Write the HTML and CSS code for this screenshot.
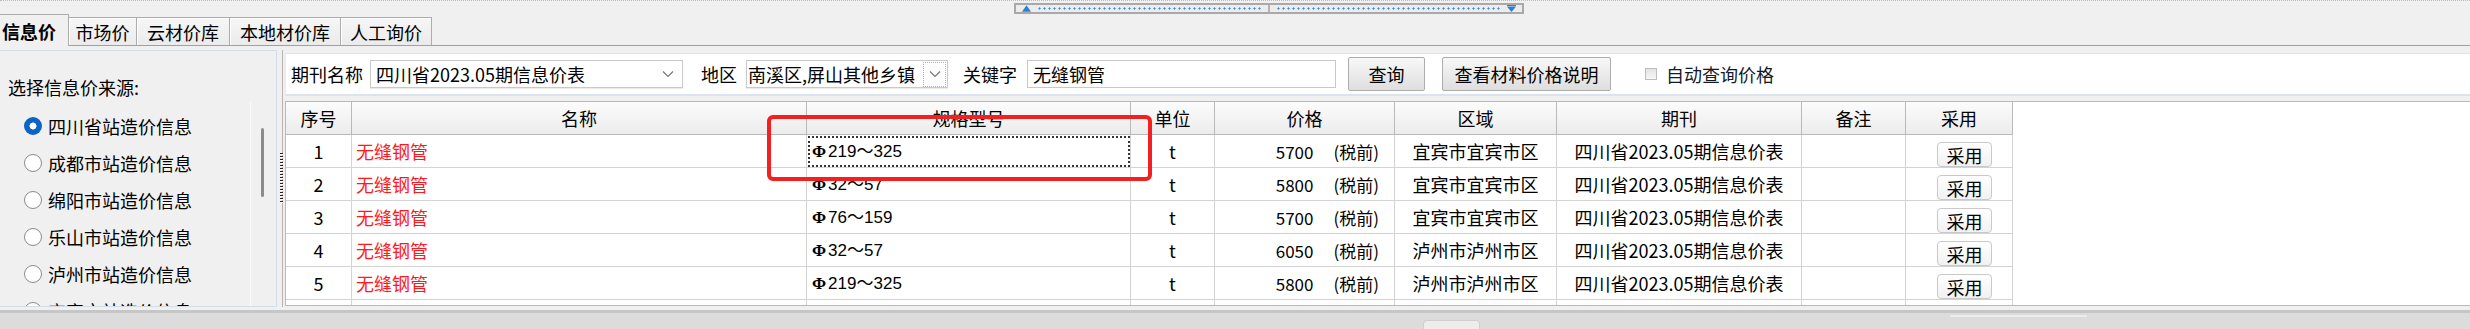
FILE: index.html
```html
<!DOCTYPE html>
<html>
<head>
<meta charset="utf-8">
<link rel="stylesheet" href="styles.css">
</head>
<body>
<div class="app">
  <div class="topbar">
    <div class="handle">
      <div class="half">
        <svg class="tri" viewBox="0 0 10 7"><polygon points="0,7 5,0 10,7" fill="#2a80d6"/></svg>
        <span class="dots"></span>
      </div>
      <div class="half">
        <span class="dots"></span>
        <svg class="tri" viewBox="0 0 10 8"><rect x="0" y="0" width="10" height="1.5" fill="#2a80d6"/><polygon points="0,2 10,2 5,8" fill="#2a80d6"/></svg>
      </div>
    </div>
  </div>

  <div class="tabs">
    <div class="tab active">信息价</div>
    <div class="tab t2">市场价</div>
    <div class="tab t3">云材价库</div>
    <div class="tab t4">本地材价库</div>
    <div class="tab t5">人工询价</div>
  </div>

  <div class="main">
    <div class="left">
      <div class="src-label">选择信息价来源:</div>
      <div class="src-body">
        <div class="radio-list">
          <div class="radio-row"><span class="radio on"></span>四川省站造价信息</div>
          <div class="radio-row"><span class="radio"></span>成都市站造价信息</div>
          <div class="radio-row"><span class="radio"></span>绵阳市站造价信息</div>
          <div class="radio-row"><span class="radio"></span>乐山市站造价信息</div>
          <div class="radio-row"><span class="radio"></span>泸州市站造价信息</div>
          <div class="radio-row"><span class="radio"></span>宜宾市站造价信息</div>
        </div>
        <div class="vscroll"><div class="thumb"></div></div>
      </div>
    </div>

    <div class="splitter"><div class="grip"></div></div>

    <div class="right">
      <div class="toolbar">
        <span class="lbl">期刊名称</span>
        <div class="combo combo1">
          <span class="combo-val">四川省2023.05期信息价表</span>
          <svg class="chev" viewBox="0 0 12 8"><polyline points="1,1.5 6,6.5 11,1.5" fill="none" stroke="#777" stroke-width="1.2"/></svg>
        </div>
        <span class="lbl l2">地区</span>
        <div class="combo combo2">
          <span class="combo-clip">南溪区,屏山其他乡镇</span>
          <span class="drop-btn"><svg class="chev" viewBox="0 0 12 8"><polyline points="1,1.5 6,6.5 11,1.5" fill="none" stroke="#777" stroke-width="1.2"/></svg></span>
        </div>
        <span class="lbl l3">关键字</span>
        <div class="input">无缝钢管</div>
        <div class="btn btn-q">查询</div>
        <div class="btn btn-m">查看材料价格说明</div>
        <span class="chk"></span>
        <span class="chk-label">自动查询价格</span>
      </div>

      <div class="grid-wrap">
        <div class="grid">
          <div class="hc">序号</div>
          <div class="hc">名称</div>
          <div class="hc">规格型号</div>
          <div class="hc">单位</div>
          <div class="hc">价格</div>
          <div class="hc">区域</div>
          <div class="hc">期刊</div>
          <div class="hc">备注</div>
          <div class="hc">采用</div>

          <div class="c ctr">1</div>
          <div class="c name">无缝钢管</div>
          <div class="c spec sel"><span class="phi">Φ</span>219～325</div>
          <div class="c ctr">t</div>
          <div class="c price">5700<span class="tax">(税前)</span></div>
          <div class="c ctr">宜宾市宜宾市区</div>
          <div class="c ctr">四川省2023.05期信息价表</div>
          <div class="c"></div>
          <div class="c use"><span class="use-btn">采用</span></div>

          <div class="c ctr">2</div>
          <div class="c name">无缝钢管</div>
          <div class="c spec"><span class="phi">Φ</span>32～57</div>
          <div class="c ctr">t</div>
          <div class="c price">5800<span class="tax">(税前)</span></div>
          <div class="c ctr">宜宾市宜宾市区</div>
          <div class="c ctr">四川省2023.05期信息价表</div>
          <div class="c"></div>
          <div class="c use"><span class="use-btn">采用</span></div>

          <div class="c ctr">3</div>
          <div class="c name">无缝钢管</div>
          <div class="c spec"><span class="phi">Φ</span>76～159</div>
          <div class="c ctr">t</div>
          <div class="c price">5700<span class="tax">(税前)</span></div>
          <div class="c ctr">宜宾市宜宾市区</div>
          <div class="c ctr">四川省2023.05期信息价表</div>
          <div class="c"></div>
          <div class="c use"><span class="use-btn">采用</span></div>

          <div class="c ctr">4</div>
          <div class="c name">无缝钢管</div>
          <div class="c spec"><span class="phi">Φ</span>32～57</div>
          <div class="c ctr">t</div>
          <div class="c price">6050<span class="tax">(税前)</span></div>
          <div class="c ctr">泸州市泸州市区</div>
          <div class="c ctr">四川省2023.05期信息价表</div>
          <div class="c"></div>
          <div class="c use"><span class="use-btn">采用</span></div>

          <div class="c ctr">5</div>
          <div class="c name">无缝钢管</div>
          <div class="c spec"><span class="phi">Φ</span>219～325</div>
          <div class="c ctr">t</div>
          <div class="c price">5800<span class="tax">(税前)</span></div>
          <div class="c ctr">泸州市泸州市区</div>
          <div class="c ctr">四川省2023.05期信息价表</div>
          <div class="c"></div>
          <div class="c use"><span class="use-btn">采用</span></div>

          <div class="c ctr"></div>
          <div class="c name">无缝钢管</div>
          <div class="c"></div>
          <div class="c"></div>
          <div class="c"></div>
          <div class="c"></div>
          <div class="c"></div>
          <div class="c"></div>
          <div class="c"></div>
        </div>
      </div>
    </div>
  </div>

  <div class="bottom">
    <div class="bthumb"></div>
    <div class="bline"></div>
  </div>

  <div class="redbox"></div>
</div>
</body>
</html>
```

FILE: styles.css
```css
html, body {
  margin: 0;
  padding: 0;
}
body {
  width: 2470px;
  height: 329px;
  overflow: hidden;
  background: #f0f0f0;
  font-family: "Noto Sans CJK SC", "Noto Sans", sans-serif;
  font-size: 18px;
  color: #000;
}
.app {
  position: relative;
  height: 329px;
}

/* top splitter bar */
.topbar {
  height: 14px;
  box-sizing: border-box;
  border-top: 1px dotted #bcbcbc;
  padding-top: 2px;
}
.handle {
  margin-left: 1014px;
  width: 510px;
  height: 11px;
  box-sizing: border-box;
  border: 2px solid #a9a9a9;
  background: #ececec;
  display: flex;
}
.half {
  flex: 1;
  display: flex;
  align-items: center;
  padding: 0 6px;
  gap: 6px;
}
.half + .half {
  border-left: 2px solid #b4b4b4;
}
.dots {
  flex: 1;
  height: 3px;
  background-image: radial-gradient(circle, #3b8de0 0 0.9px, transparent 1.2px);
  background-size: 5px 3px;
}
.tri {
  width: 9px;
  height: 7px;
}

/* tabs */
.tabs {
  height: 32px;
  box-sizing: border-box;
  border-bottom: 1px solid #a0a0a0;
  display: flex;
  align-items: flex-end;
}
.tab {
  height: 28px;
  box-sizing: border-box;
  border: 1px solid #acacac;
  border-bottom: none;
  margin-left: -1px;
  background: linear-gradient(#f6f6f6, #ebebeb);
  box-shadow: inset 1px 1px 0 #fff;
  display: flex;
  align-items: center;
  justify-content: center;
  line-height: 1;
  white-space: nowrap;
}
.tab.active {
  width: 69px;
  height: 32px;
  margin-left: 0;
  margin-bottom: -1px;
  border-left: none;
  background: #f0f0f0;
  box-shadow: none;
  font-weight: bold;
  justify-content: flex-start;
  padding-left: 2px;
  position: relative;
  z-index: 1;
}
.t2 { width: 69px; }
.t3 { width: 94px; }
.t4 { width: 112px; }
.t5 { width: 92px; }

/* main area */
.main {
  display: flex;
  height: 264px;
}
.left {
  width: 277px;
  height: 257px;
  margin-top: 4px;
  box-sizing: border-box;
  border: 1px solid #d3dde7;
  border-left: none;
  display: flex;
  flex-direction: column;
  overflow: hidden;
}
.src-label {
  height: 51px;
  box-sizing: border-box;
  padding: 23px 0 0 8px;
  line-height: 26px;
}
.src-body {
  flex: 1;
  display: flex;
  min-height: 0;
}
.radio-list {
  width: 251px;
  padding-top: 5px;
  overflow: hidden;
}
.radio-row {
  height: 37px;
  display: flex;
  align-items: center;
  padding-left: 24px;
  white-space: nowrap;
  line-height: 1;
}
.radio {
  width: 18px;
  height: 18px;
  box-sizing: border-box;
  border-radius: 50%;
  border: 1.5px solid #8a8a8a;
  background: #fff;
  margin-right: 6px;
  flex: none;
}
.radio.on {
  border: none;
  background: radial-gradient(circle, #fff 0 3.2px, #0b63c5 3.8px);
}
.vscroll {
  width: 25px;
  border-left: 1px solid #fbfbfb;
}
.thumb {
  margin-top: 26px;
  margin-left: 10px;
  width: 3px;
  height: 69px;
  background: #8c8c8c;
  border-radius: 2px;
}

.splitter {
  width: 8px;
  height: 257px;
  margin-top: 4px;
  display: flex;
  align-items: center;
  padding-left: 3px;
  box-sizing: border-box;
  background: linear-gradient(to right, transparent 5px, #b4b4b4 5px 6px, transparent 6px);
}
.grip {
  width: 3px;
  height: 51px;
  background: repeating-linear-gradient(to bottom, #222 0 1px, #fff 1px 2px, transparent 2px 3px);
}

.right {
  flex: 1;
  min-width: 0;
  display: flex;
  flex-direction: column;
}
.toolbar {
  margin-top: 7px;
  height: 43px;
  box-sizing: border-box;
  background: #fff;
  border-top: 1px solid #dbe4ee;
  border-bottom: 2px solid #dbe4ee;
  border-left: 1px solid #e4eaf0;
  display: flex;
  align-items: center;
  padding-left: 5px;
  white-space: nowrap;
}
.lbl {
  line-height: 1;
}
.l2 { margin-left: 18px; }
.l3 { margin-left: 15px; }
.combo {
  height: 28px;
  box-sizing: border-box;
  border: 1px solid #c9c9c9;
  background: #fff;
  box-shadow: 0 1px 1px rgba(0, 0, 0, 0.08);
  display: flex;
  align-items: center;
  line-height: 1;
}
.combo1 {
  width: 313px;
  margin-left: 7px;
  padding: 0 8px 0 5px;
}
.combo-val {
  flex: 1;
}
.chev {
  width: 12px;
  height: 8px;
}
.combo2 {
  width: 202px;
  margin-left: 9px;
  padding-right: 1px;
}
.combo-clip {
  flex: 1;
  min-width: 0;
  white-space: nowrap;
  padding-left: 1px;
}
.drop-btn {
  width: 23px;
  height: 25px;
  box-sizing: border-box;
  border: 1px dotted #8db6de;
  display: flex;
  align-items: center;
  justify-content: center;
}
.input {
  width: 309px;
  height: 28px;
  margin-left: 10px;
  box-sizing: border-box;
  border: 1px solid #c9c9c9;
  padding-left: 5px;
  display: flex;
  align-items: center;
  line-height: 1;
}
.btn {
  height: 34px;
  box-sizing: border-box;
  border: 1px solid #adadad;
  border-radius: 2px;
  background: linear-gradient(#f8f8f8, #dedede);
  display: flex;
  align-items: center;
  justify-content: center;
  line-height: 1;
}
.btn-q { width: 77px; margin-left: 12px; }
.btn-m { width: 169px; margin-left: 17px; }
.chk {
  width: 12px;
  height: 12px;
  margin-left: 34px;
  box-sizing: border-box;
  border: 1px solid #bdbdbd;
  background: linear-gradient(#e4e4e4, #f6f6f6);
}
.chk-label {
  margin-left: 9px;
  color: #121a2a;
  line-height: 1;
}

/* grid */
.grid-wrap {
  margin-top: 5px;
  height: 205px;
  box-sizing: border-box;
  border-top: 1px solid #a9bdd0;
  border-bottom: 1px solid #a9bdd0;
  border-left: 1px solid #a9bdd0;
  background: #fff;
  overflow: hidden;
}
.grid {
  display: grid;
  grid-template-columns: 66px 455px 324px 84px 180px 162px 245px 104px 107px;
  grid-auto-rows: 33px;
  width: 1727px;
}
.hc {
  box-sizing: border-box;
  background: linear-gradient(#fcfcfc, #ececec);
  border-right: 1px solid #b9b9b9;
  border-bottom: 1px solid #b9b9b9;
  display: flex;
  align-items: center;
  justify-content: center;
  line-height: 1;
}
.c {
  box-sizing: border-box;
  border-right: 1px solid #d3d3d3;
  border-bottom: 1px solid #d3d3d3;
  display: flex;
  align-items: center;
  white-space: nowrap;
  overflow: hidden;
  line-height: 1;
}
.ctr {
  justify-content: center;
}
.name {
  color: #ff1a1a;
  padding-left: 4px;
}
.spec {
  padding-left: 5px;
  font-family: "Liberation Sans", "Noto Sans CJK SC", sans-serif;
  font-size: 17px;
}
.phi {
  font-family: "Liberation Serif", serif;
  font-weight: bold;
  margin-right: 2px;
}
.sel {
  outline: 2px dotted #333;
  outline-offset: -3px;
}
.price {
  justify-content: flex-end;
  padding-right: 15px;
  font-size: 17px;
}
.tax {
  margin-left: 20px;
}
.use {
  align-items: flex-end;
  padding-left: 31px;
}
.use-btn {
  width: 55px;
  height: 25px;
  box-sizing: border-box;
  border: 1px solid #c9c9c9;
  border-radius: 4px;
  background: linear-gradient(#ffffff, #f1f1f1);
  display: flex;
  align-items: center;
  justify-content: center;
}

/* bottom band */
.bottom {
  height: 19px;
  box-sizing: border-box;
  border-top: 3px solid #c6c6c6;
  background: #dcdcdc;
  display: flex;
  align-items: flex-start;
}
.bthumb {
  margin-left: 1423px;
  margin-top: 7px;
  width: 57px;
  height: 9px;
  box-sizing: border-box;
  background: #ededed;
  border: 1px solid #cfcfcf;
  border-bottom: none;
  border-radius: 4px 4px 0 0;
}
.bline {
  margin-left: 470px;
  margin-top: 2px;
  width: 137px;
  height: 2px;
  background: #ececec;
}

/* annotation overlay */
.redbox {
  position: absolute;
  left: 767px;
  top: 115px;
  width: 385px;
  height: 66px;
  box-sizing: border-box;
  border: 4px solid #f41f1f;
  border-radius: 6px;
  pointer-events: none;
}
```
